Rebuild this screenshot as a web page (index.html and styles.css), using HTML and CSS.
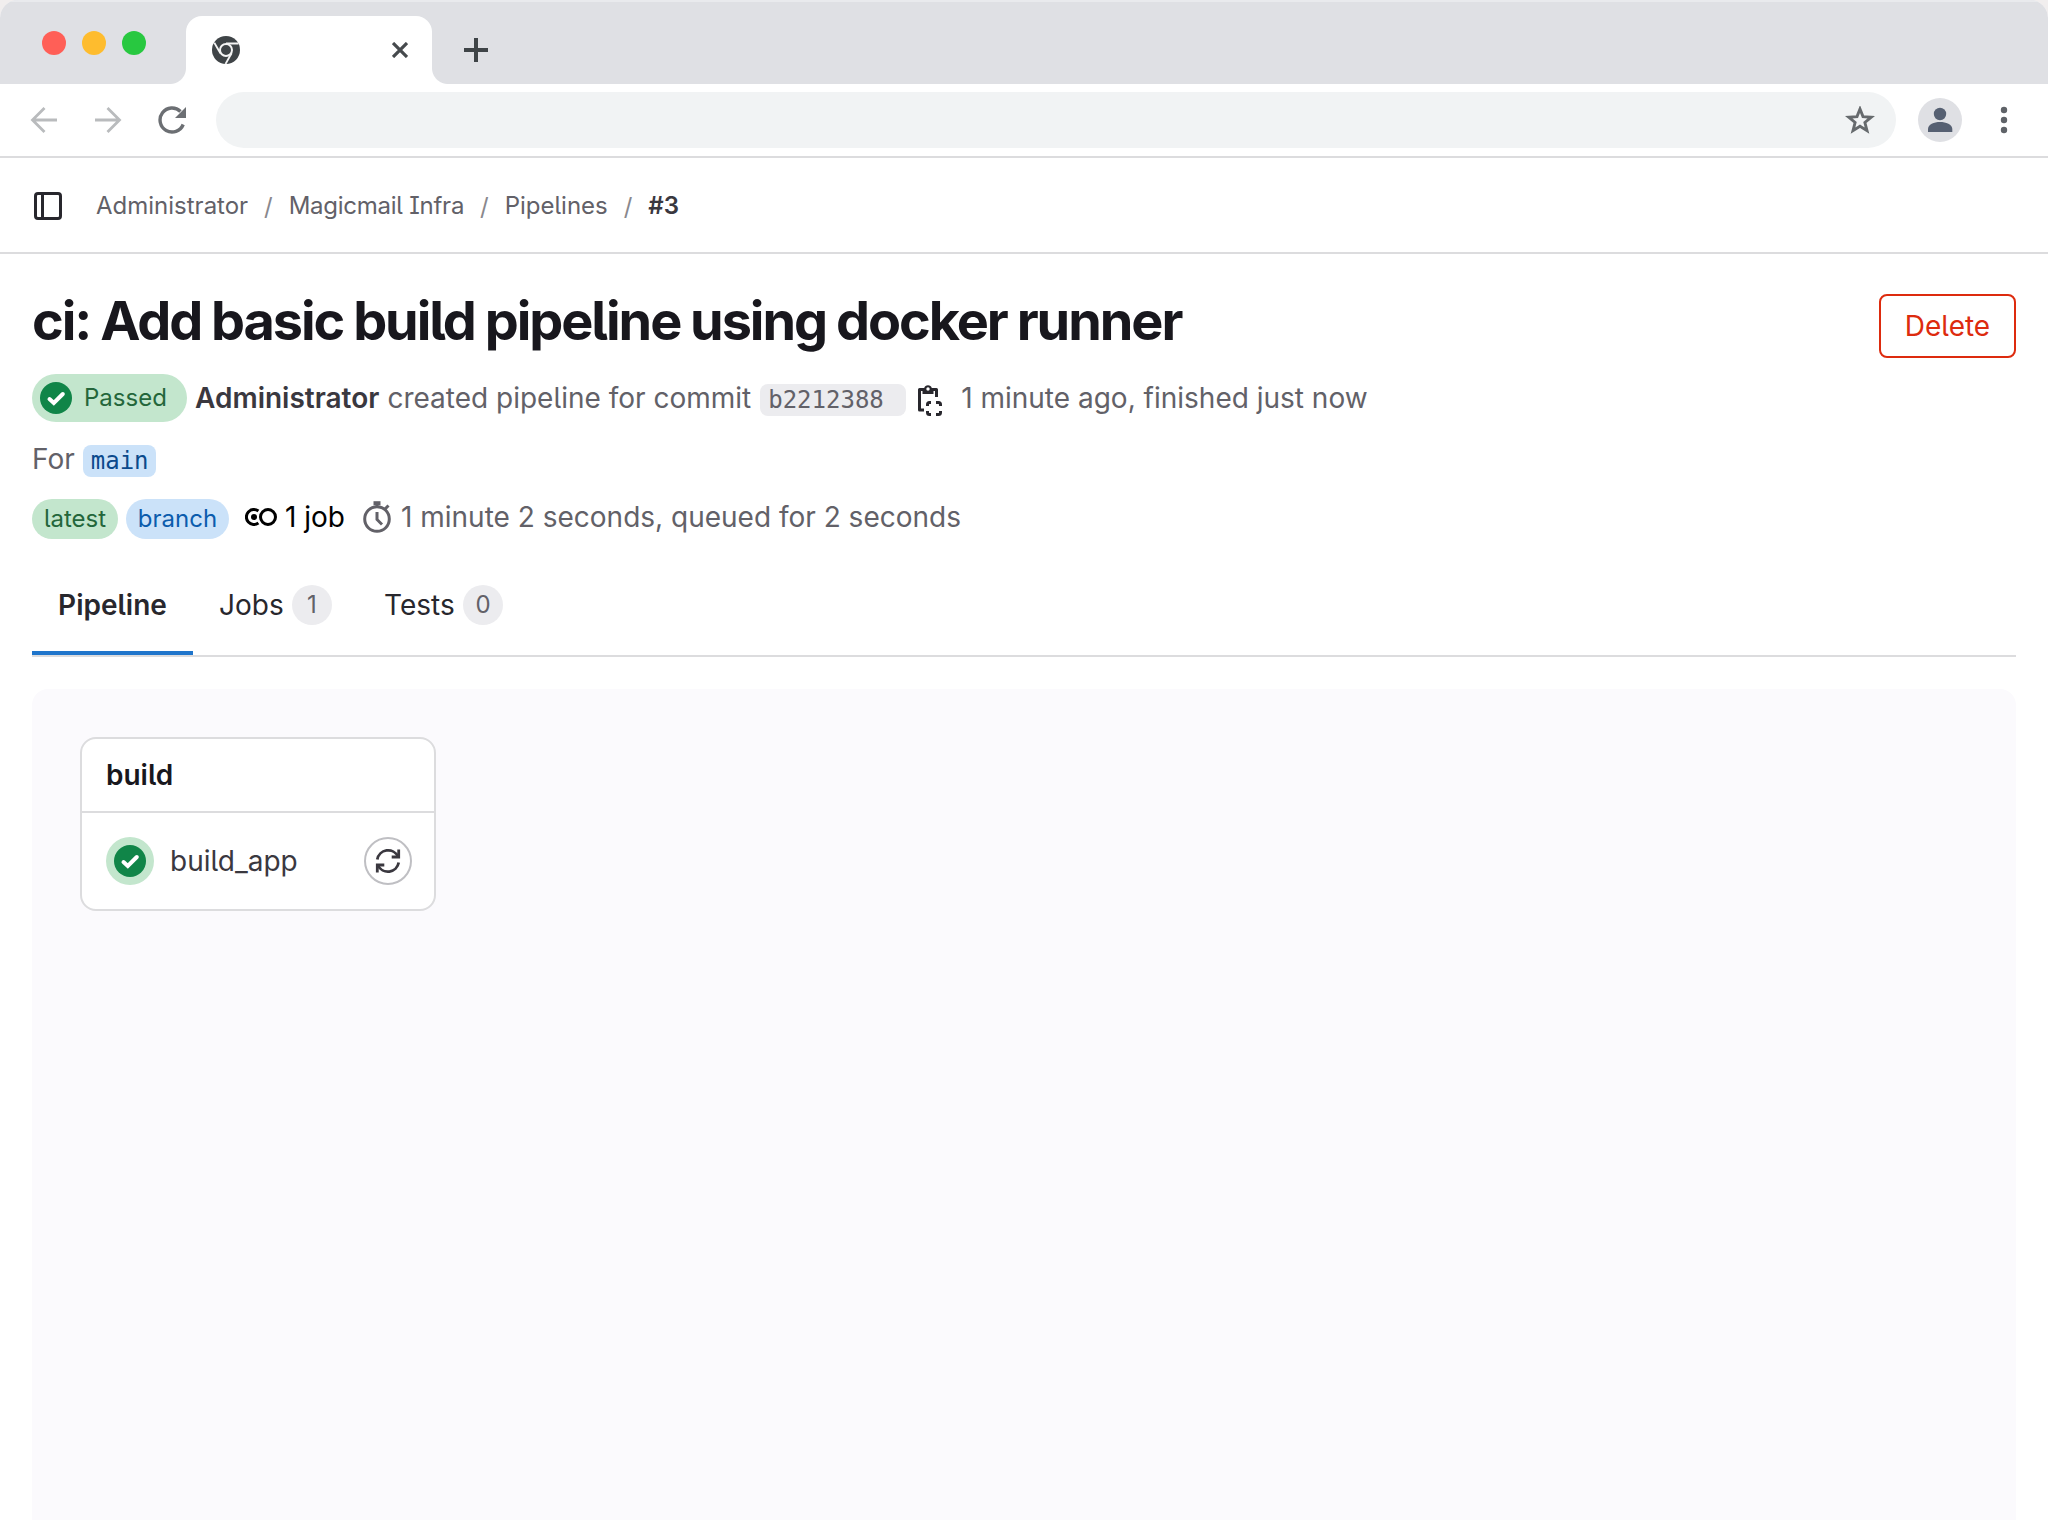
FILE: index.html
```html
<!DOCTYPE html>
<html lang="en">
<head>
<meta charset="utf-8">
<title>Pipeline #3</title>
<link rel="stylesheet" href="styles.css">
</head>
<body>
<div class="window">
  <header class="tabstrip">
    <div class="lights"><i class="light red"></i><i class="light yellow"></i><i class="light green"></i></div>
    <div class="browser-tab">
      <svg width="28" height="28" viewBox="0 0 28 28"><circle cx="14" cy="14" r="14" fill="#3f4447"/><circle cx="14" cy="14" r="6" fill="none" stroke="#f4f4f4" stroke-width="2"/><g stroke="#f4f4f4" stroke-width="1.800"><path d="M14 7.500H26.500"/><path d="M8.400 17.200L2.300 6.700"/><path d="M19.600 17.200L13.500 28"/></g></svg>
      <svg width="16" height="16" viewBox="0 0 16 16"><path d="M1 1l14 14M15 1L1 15" stroke="#464a4d" stroke-width="3.200"/></svg>
    </div>
    <svg class="plus" width="24" height="24" viewBox="0 0 24 24"><path d="M12 0v24M0 12h24" stroke="#3f4447" stroke-width="4"/></svg>
  </header>
  <nav class="toolbar">
    <svg class="nav-icon" width="28" height="28" viewBox="0 0 28 28"><path d="M27 14H3M14.500 2L2.500 14l12 12" fill="none" stroke="#b9bbbd" stroke-width="2.800"/></svg>
    <svg class="nav-icon" width="28" height="28" viewBox="0 0 28 28"><path d="M1 14h24M13.500 2l12 12-12 12" fill="none" stroke="#b9bbbd" stroke-width="2.800"/></svg>
    <svg class="nav-icon" width="28" height="28" viewBox="0 0 28 28"><path d="M25.200 18.500A12 12 0 1 1 22.500 5.500" fill="none" stroke="#6c6f73" stroke-width="3.400"/><path d="M28 1v11H17z" fill="#6c6f73"/></svg>
    <div class="address">
      <svg width="30" height="28" viewBox="0 0 30 28"><path d="M15 3l3 7.600 8.300.6-6.400 5.300 2.100 8.200-7-4.400-7 4.400 2.100-8.200-6.400-5.300 8.300-.6z" fill="none" stroke="#666a6d" stroke-width="2.900"/></svg>
    </div>
    <svg class="avatar" width="44" height="44" viewBox="0 0 44 44"><circle cx="22" cy="22" r="22" fill="#dfe0e4"/><circle cx="22" cy="16" r="6.200" fill="#566072"/><path d="M10 34v-3c0-4.500 6-7 12-7s12.300 2.500 12.300 7v3z" fill="#566072"/></svg>
    <svg width="8" height="28" viewBox="0 0 8 28"><g fill="#5f6368"><circle cx="4" cy="4" r="3.200"/><circle cx="4" cy="14" r="3.200"/><circle cx="4" cy="24" r="3.200"/></g></svg>
  </nav>
  <nav class="breadcrumbs">
    <svg width="28" height="28" viewBox="0 0 28 28"><rect x="1.500" y="1.500" width="25" height="25" rx="2.500" fill="none" stroke="#28272d" stroke-width="3"/><path d="M8.500 1v26" stroke="#28272d" stroke-width="3"/></svg>
    <span class="crumb">Administrator</span><span class="sep">/</span>
    <span class="crumb project">Magicmail Infra</span><span class="sep">/</span>
    <span class="crumb">Pipelines</span><span class="sep">/</span>
    <span class="crumb current">#3</span>
  </nav>
  <main>
    <div class="heading"><h1>ci: Add basic build pipeline using docker runner</h1><button class="delete">Delete</button></div>
    <div class="summary">
      <span class="status"><svg width="32" height="32" viewBox="0 0 32 32"><circle cx="16" cy="16" r="16" fill="#108548"/><path d="M9.500 17l4.300 4 9-9" fill="none" stroke="#fff" stroke-width="4" stroke-linecap="round"/></svg><span>Passed</span></span>
      <strong>Administrator</strong><span class="created">created pipeline for commit</span>
      <code class="sha">b2212388</code>
      <svg class="copy" width="26" height="32" viewBox="0 0 26 32"><g fill="none" stroke="#28272d" stroke-width="3" stroke-linejoin="round"><path d="M7 5.500H2.500V26H7M15 5.500h4.500V13"/><path d="M10.500 22v-1.500q0-2 2-2H14M19 18.500h2.500q2 0 2 2V22M23.500 27v1.500q0 2-2 2H19M14 30.500h-1.500q-2 0-2-2V27"/></g><path d="M5.500 4h1.700a4 4 0 0 1 7.600 0h1.700v6h-11z" fill="#28272d"/><circle cx="11" cy="5" r="1.700" fill="#fff"/></svg>
      <span>1 minute ago, finished just now</span>
    </div>
    <div class="ref-row"><span>For</span><code class="ref">main</code></div>
    <div class="facts">
      <span class="pill latest">latest</span><span class="pill branch">branch</span>
      <svg class="link" width="32" height="20" viewBox="0 0 32 20"><g fill="none" stroke="#000" stroke-width="3"><path d="M13.400 4A7.500 7.500 0 1 0 13.400 16"/><circle cx="23" cy="10" r="7.500"/></g><circle cx="9" cy="10" r="3"/></svg>
      <span class="jobs">1 job</span>
      <svg class="watch" width="28" height="32" viewBox="0 0 28 32"><g fill="none" stroke="#626168" stroke-width="3"><circle cx="14" cy="18" r="12.300"/><path d="M14 11v7.500l5 5M14 5V1M22 8l3.500-3.500"/><path d="M10.500 2.200h7" stroke-width="4"/></g></svg>
      <span class="duration">1 minute 2 seconds, queued for 2 seconds</span>
    </div>
    <div class="tabs">
      <span class="tab active">Pipeline</span>
      <span class="tab"><span>Jobs</span><b class="count">1</b></span>
      <span class="tab"><span>Tests</span><b class="count">0</b></span>
    </div>
    <section class="graph">
      <div class="stage">
        <h2>build</h2>
        <div class="job">
          <svg width="48" height="48" viewBox="0 0 48 48"><circle cx="24" cy="24" r="24" fill="#c3e6cd"/><circle cx="24" cy="24" r="16" fill="#108548"/><path d="M17.500 25l4.300 4 9-9" fill="none" stroke="#fff" stroke-width="4" stroke-linecap="round"/></svg>
          <span class="job-name">build_app</span>
          <svg width="48" height="48" viewBox="0 0 48 48"><circle cx="24" cy="24" r="23" fill="#fff" stroke="#bfbfc3" stroke-width="2"/><g fill="none" stroke="#3a383f" stroke-width="2.800"><path d="M13.300 22.500A11 11 0 0 1 34 19.500M34.700 25.500A11 11 0 0 1 14 28.500"/><path d="M34.700 12.500v7.500h-7M13.300 35.500V28h7"/></g></svg>
        </div>
      </div>
    </section>
  </main>
</div>
</body>
</html>
```
FILE: styles.css
```css
* { box-sizing: border-box; }
html { background: #f1eeee; }
body { margin: 0; font-family: Inter, "Liberation Sans", sans-serif; font-size: 28px; color: #626168; font-feature-settings: "cv05", "cv08"; }
svg { display: block; flex: none; }
.window { height: 1520px; overflow: hidden; display: flex; flex-direction: column; background: #fff; border-radius: 18px 18px 0 0; }
.tabstrip { height: 84px; flex: none; display: flex; background: #dfe0e4; border-top: 2px solid #e9eaed; }
.lights { width: 186px; display: flex; gap: 16px; padding: 29px 0 0 42px; }
.light { width: 24px; height: 24px; border-radius: 50%; }
.red { background: #ff5f57; }
.yellow { background: #febc2e; }
.green { background: #28c840; }
.browser-tab { position: relative; width: 246px; height: 68px; margin-top: 14px; padding: 0 24px 0 26px; display: flex; align-items: center; justify-content: space-between; background: #fff; border-radius: 16px 16px 0 0; }
.browser-tab::before, .browser-tab::after { content: ""; position: absolute; bottom: 0; width: 16px; height: 16px; }
.browser-tab::before { left: -16px; background: radial-gradient(circle at 0 0, transparent 15.500px, #fff 16.500px); }
.browser-tab::after { right: -16px; background: radial-gradient(circle at 100% 0, transparent 15.500px, #fff 16.500px); }
.plus { margin: 36px 0 0 32px; }
.toolbar { height: 74px; flex: none; display: flex; align-items: center; padding: 0 40px 0 30px; border-bottom: 2px solid #dcdcde; }
.nav-icon { margin-right: 36px; }
.nav-icon:nth-child(3) { margin-right: 30px; }
.address { flex: 1; height: 56px; margin-right: 22px; padding-right: 21px; display: flex; align-items: center; justify-content: flex-end; border-radius: 28px; background: #f1f3f4; }
.avatar { margin-right: 38px; }
.breadcrumbs { height: 96px; flex: none; display: flex; align-items: center; padding: 2px 0 0 34px; font-size: 24px; border-bottom: 2px solid #dcdcde; white-space: nowrap; }
.crumb { line-height: 32px; }
.project { letter-spacing: -0.250px; }
.breadcrumbs svg { margin-right: 34px; }
.sep { width: 40.500px; text-align: center; color: #89888d; }
.current { font-weight: 600; color: #3a383f; }
main { flex: 1; padding: 34px 32px 0; display: flex; flex-direction: column; white-space: nowrap; }
.heading { display: flex; justify-content: space-between; height: 86px; }
h1 { margin: 1px 0 0; font-size: 54px; line-height: 64px; font-weight: 650; letter-spacing: -2.050px; word-spacing: -0.900px; color: #18171d; }
.delete { width: 137px; height: 64px; margin-top: 6px; padding: 0; border: 2px solid #dd2b0e; border-radius: 8px; background: #fff; color: #dd2b0e; font: inherit; font-feature-settings: inherit; }
.summary { height: 48px; display: flex; align-items: center; }
.status { height: 48px; width: 155px; margin-right: 8px; padding-left: 8px; display: flex; align-items: center; gap: 12px; border-radius: 24px; background: #c3e6cd; color: #24663b; font-size: 24px; }
.status span { margin-top: -2px; }
strong { font-weight: 600; color: #3a383f; margin-right: 8px; }
code { font-family: "DejaVu Sans Mono", "Liberation Mono", monospace; font-size: 24px; line-height: 32px; height: 32px; padding: 0 8px; border-radius: 8px; font-feature-settings: normal; }
.sha { width: 146px; margin: 3px 11px 0 9px; background: #ececef; }
.copy { margin: 3px 18px 0 0; }
.ref-row { height: 34px; margin-top: 20px; display: flex; align-items: center; }
.ref { width: 73px; margin: 4px 0 0 8px; background: #cbe2f9; color: #0b4a8c; }
.facts { height: 40px; margin-top: 23px; display: flex; align-items: center; }
.pill { height: 40px; line-height: 39px; border-radius: 20px; font-size: 24px; text-align: center; margin-right: 8px; }
.latest { width: 86px; background: #c3e6cd; color: #24663b; }
.branch { width: 103px; background: #cbe2f9; color: #0b5cad; margin-right: 16px; }
.link { margin-right: 8px; margin-top: -4px; }
.jobs { color: #000; margin-top: -4px; }
.watch { margin: -4px 10px 0 18px; }
.duration { margin-top: -4px; }
.tabs { height: 118px; flex: none; display: flex; border-bottom: 2px solid #dcdcde; color: #28272d; }
.tab { display: flex; align-items: center; height: 116px; padding: 18px 26px 2px; gap: 8.300px; line-height: 40px; }
.tab.active { width: 161px; justify-content: center; padding: 20px 0 0; font-weight: 600; border-bottom: 4px solid #1f75cb; }
.count { width: 40px; height: 40px; line-height: 39px; border-radius: 50%; background: #ececef; color: #626168; text-align: center; font-size: 24px; font-weight: 400; }
.graph { flex: 1; margin-top: 32px; padding: 48px; background: #fbfafd; border-radius: 16px 16px 0 0; }
.stage { width: 356px; height: 174px; border: 2px solid #dcdcde; border-radius: 16px; background: #fff; }
h2 { margin: 0; height: 74px; line-height: 72px; padding-left: 24px; font-size: 28px; font-weight: 600; color: #18171d; border-bottom: 2px solid #dcdcde; }
.job { height: 96px; padding: 0 22px 0 24px; display: flex; align-items: center; color: #3a383f; }
.job-name { flex: 1; padding-left: 16px; }
```
